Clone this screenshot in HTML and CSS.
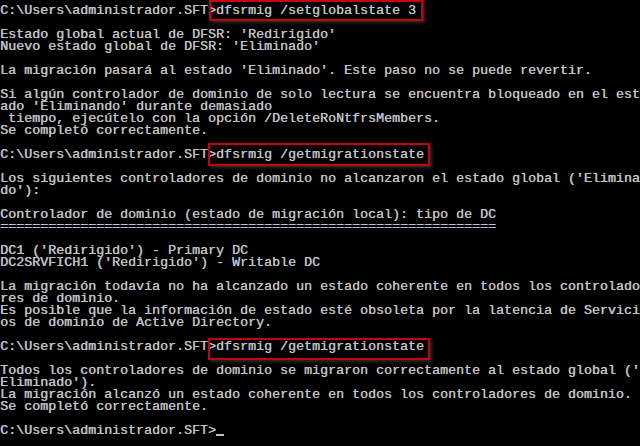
FILE: index.html
```html
<!DOCTYPE html>
<html lang="es">
<head>
<meta charset="utf-8">
<title>dfsrmig</title>
<link rel="stylesheet" href="styles.css">
</head>
<body>
<div class="console">
<pre class="out">C:\Users\administrador.SFT&gt;dfsrmig /setglobalstate 3

Estado global actual de DFSR: 'Redirigido'
Nuevo estado global de DFSR: 'Eliminado'

La migración pasará al estado 'Eliminado'. Este paso no se puede revertir.

Si algún controlador de dominio de solo lectura se encuentra bloqueado en el est
ado 'Eliminando' durante demasiado
 tiempo, ejecútelo con la opción /DeleteRoNtfrsMembers.
Se completó correctamente.

C:\Users\administrador.SFT&gt;dfsrmig /getmigrationstate

Los siguientes controladores de dominio no alcanzaron el estado global ('Elimina
do'):

Controlador de dominio (estado de migración local): tipo de DC
==============================================================

DC1 ('Redirigido') - Primary DC
DC2SRVFICH1 ('Redirigido') - Writable DC

La migración todavía no ha alcanzado un estado coherente en todos los controlado
res de dominio.
Es posible que la información de estado esté obsoleta por la latencia de Servici
os de dominio de Active Directory.

C:\Users\administrador.SFT&gt;dfsrmig /getmigrationstate

Todos los controladores de dominio se migraron correctamente al estado global ('
Eliminado').
La migración alcanzó un estado coherente en todos los controladores de dominio.
Se completó correctamente.

C:\Users\administrador.SFT&gt;<span class="cursor"> </span></pre>
<div class="mark mark-1"></div>
<div class="mark mark-2"></div>
<div class="mark mark-3"></div>
</div>
</body>
</html>
```
FILE: styles.css
```css
html, body {
  margin: 0;
  padding: 0;
  background: #000;
}
.console {
  position: relative;
  width: 640px;
  height: 446px;
  overflow: hidden;
  background: #000;
}
.out {
  margin: 0;
  padding: 5px 0 0 0;
  font-family: "Liberation Mono", "DejaVu Sans Mono", monospace;
  font-size: 13.333px;
  line-height: 12px;
  color: #c0c0c0;
  white-space: pre;
  text-shadow: 0.4px 0 0 #c0c0c0;
}
.cursor {
  display: inline-block;
  width: 8px;
  height: 12px;
  vertical-align: top;
  box-shadow: inset 0 -2px 0 #c0c0c0;
  transform: translateY(-1px);
}
.mark {
  position: absolute;
  border: 2px solid #c8000a;
  box-shadow: 2px 2px 3px rgba(120, 120, 120, 0.35);
}
.mark-1 {
  left: 209px;
  top: 0;
  width: 210px;
  height: 17px;
}
.mark-2 {
  left: 208px;
  top: 143px;
  width: 218px;
  height: 19px;
}
.mark-3 {
  left: 208px;
  top: 338px;
  width: 218px;
  height: 18px;
}
```
